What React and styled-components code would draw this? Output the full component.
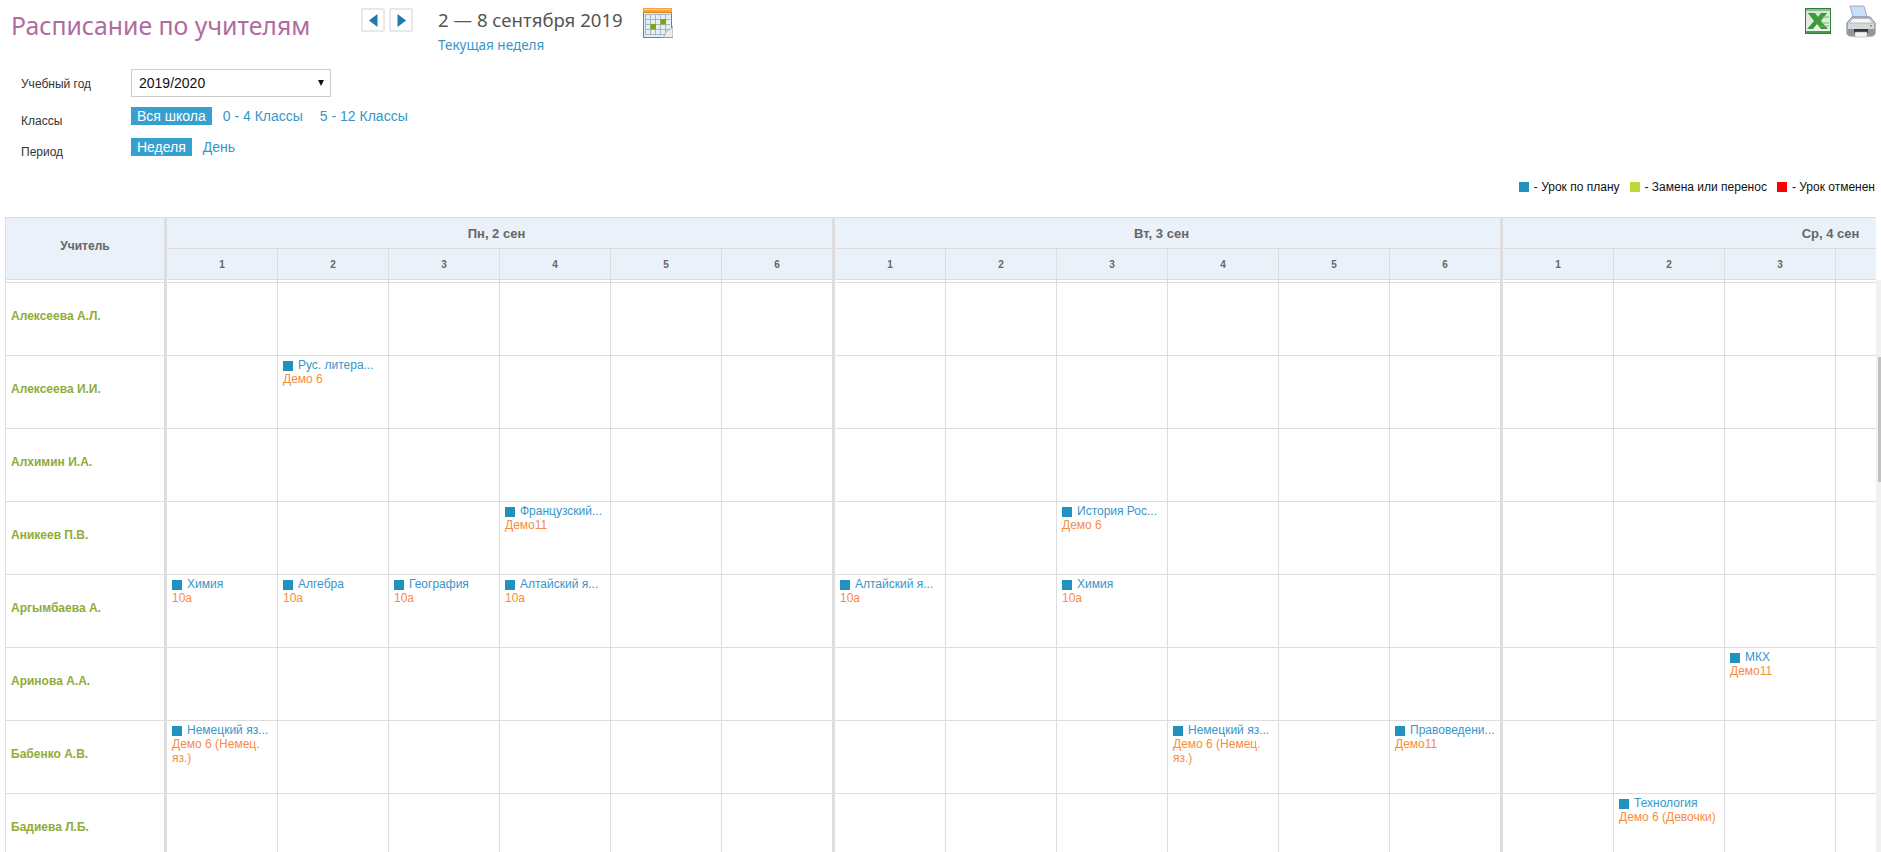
import styled, { createGlobalStyle } from "styled-components";

const GlobalStyle = createGlobalStyle`
  html, body {
    margin: 0;
    padding: 0;
    height: 100%;
    overflow: hidden;
    background: #fff;
    font-family: "Liberation Sans", Arial, sans-serif;
  }
`;

const Page = styled.div`
  width: 1881px;
  height: 852px;
  overflow: hidden;
`;
const TopBar = styled.div`
  display: flex;
  align-items: flex-start;
  height: 69px;
  padding: 8px 5px 0 11px;
  box-sizing: border-box;
`;
const Title = styled.h1`
  margin: -1px 0 0;
  width: 350px;
  font-family: "Noto Sans", sans-serif;
  font-weight: 400;
  font-size: 24.8px;
  line-height: 36px;
  color: #b06ca0;
`;
const ArrowButton = styled.button`
  width: 24px;
  height: 24px;
  margin-right: 4px;
  padding: 0;
  display: flex;
  align-items: center;
  justify-content: center;
  background: #fff;
  border: 2px solid #e8e8e8;
  border-radius: 2px;
`;
const DateBlock = styled.div`
  margin-left: 21px;
  width: 205px;
`;
const DateText = styled.div`
  font-family: "Noto Sans", sans-serif;
  font-size: 18.6px;
  line-height: 24px;
  color: #555;
`;
const CurrentWeek = styled.a`
  display: block;
  margin-top: 4px;
  font-family: "Noto Sans", sans-serif;
  font-size: 13.5px;
  line-height: 18px;
  color: #3796c8;
`;
const Spacer = styled.div`
  flex: 1;
`;
const Tool = styled.div`
  display: flex;
  margin-left: ${(p) => p.$gap}px;
  margin-top: ${(p) => p.$top}px;
`;
const Filters = styled.div`
  display: grid;
  grid-template-columns: 110px auto;
  grid-auto-rows: min-content;
  justify-content: start;
  padding-left: 21px;
`;
const Label = styled.div`
  font-size: 12px;
  line-height: 14px;
  color: #333;
  padding-top: ${(p) => p.$top}px;
`;
const YearSelect = styled.div`
  display: flex;
  align-items: center;
  justify-content: space-between;
  box-sizing: border-box;
  width: 200px;
  height: 28px;
  padding: 0 6px 0 7px;
  border: 1px solid #ccc;
  font-size: 14px;
  color: #111;
`;
const Links = styled.div`
  display: flex;
  align-items: center;
  height: 18px;
  margin-top: ${(p) => p.$top}px;
`;
const LinkItem = styled.a`
  font-size: 14px;
  line-height: 18px;
  padding: 0 6px;
  margin-right: 5px;
  color: ${(p) => (p.$active ? "#fff" : "#3796c8")};
  background: ${(p) => (p.$active ? "#36a0d0" : "transparent")};
`;
const Legend = styled.div`
  display: flex;
  justify-content: flex-end;
  align-items: center;
  height: 14px;
  margin-top: 21px;
  padding-right: 6px;
  font-size: 12px;
  color: #111;
`;
const LegendItem = styled.div`
  display: flex;
  align-items: center;
  margin-left: 10px;
`;
const Mark = styled.i`
  display: block;
  flex: none;
  width: 10px;
  height: 10px;
  margin-right: 5px;
  background: ${(p) => p.$color};
`;
const TableFrame = styled.div`
  display: flex;
  margin-top: 23px;
  padding-left: 5px;
`;
const TableClip = styled.div`
  width: 1871px;
  height: 635px;
  overflow: hidden;
`;
const Scrollbar = styled.div`
  flex: none;
  width: 5px;
  height: 572px;
  margin-top: 63px;
  background: #f1f1f1;
  display: flex;
  justify-content: flex-end;
`;
const ScrollThumb = styled.div`
  width: 3px;
  height: 125px;
  margin-top: 77px;
  background: #c1c1c1;
`;
const Row = styled.div`
  display: flex;
  width: max-content;
  box-sizing: border-box;
  height: ${(p) => p.$height}px;
  border-bottom: 1px solid #ddd;
  border-top: ${(p) => (p.$head ? "1px solid #ddd" : "none")};
  background: ${(p) => (p.$head ? "#eaf1f9" : "#fff")};
`;
const TeacherHead = styled.div`
  width: 158px;
  border-left: 1px solid #ddd;
  display: flex;
  align-items: center;
  justify-content: center;
  padding-bottom: 6px;
  box-sizing: content-box;
  font-size: 12px;
  font-weight: 700;
  color: #666;
`;
const TeacherCell = styled.div`
  width: 153px;
  padding: 0 0 6px 5px;
  border-left: 1px solid #ddd;
  display: flex;
  align-items: center;
  font-size: 12px;
  font-weight: 700;
  color: #8fac37;
`;
const Day = styled.div`
  width: 665px;
  border-left: 3px solid #ddd;
`;
const DayTitle = styled.div`
  box-sizing: border-box;
  height: 31px;
  padding-right: ${(p) => p.$shift}px;
  border-bottom: 1px solid #ddd;
  display: flex;
  align-items: center;
  justify-content: center;
  font-size: 13px;
  font-weight: 700;
  color: #666;
`;
const Slots = styled.div`
  display: grid;
  grid-template-columns: repeat(5, 111px) 110px;
  height: 100%;
`;
const HeadSlots = styled(Slots)`
  height: 30px;
`;
const PeriodHead = styled.div`
  display: flex;
  align-items: center;
  justify-content: center;
  font-size: 10px;
  font-weight: 700;
  color: #666;
  &:not(:last-child) {
    border-right: 1px solid #ddd;
  }
`;
const Slot = styled.div`
  box-sizing: border-box;
  padding: 2px 5px 0;
  min-width: 0;
  font-size: 12px;
  line-height: 14px;
  &:not(:last-child) {
    border-right: 1px solid #ddd;
  }
`;
const Subject = styled.div`
  display: flex;
  color: #3796c8;
  white-space: nowrap;
`;
const SubjectMark = styled(Mark)`
  margin-top: 3px;
`;
const Group = styled.div`
  color: #f58c3f;
`;

const PrevIcon = () => (
  <svg width="9" height="13" viewBox="0 0 9 13">
    <path d="M8.500 0v13L0 6.500z" fill="#2279ac" />
  </svg>
);
const NextIcon = () => (
  <svg width="9" height="13" viewBox="0 0 9 13">
    <path d="M.5 0v13L9 6.500z" fill="#2279ac" />
  </svg>
);
const CalendarIcon = () => (
  <svg width="30" height="30" viewBox="0 0 30 30">
    <rect x="0.5" y="2.5" width="28" height="27" fill="#e4eff7" stroke="#4e86b4" />
    <rect x="0" y="0" width="29" height="5" fill="#f7a43c" />
    <rect x="1" y="1" width="27" height="1" fill="#fbd08e" />
    <rect x="0" y="4" width="29" height="1" fill="#d9862a" />
    <path
      d="M2.500 6.500v21M7.500 6.500v21M12.500 6.500v21M17.500 6.500v21M22.500 6.500v21M2 6.500h25M2 11.500h25M2 16.500h25M2 21.500h25M2 26.500h25"
      stroke="#a4b6c4"
      fill="none"
    />
    <rect x="7.500" y="16" width="5.500" height="5.500" fill="#7da800" />
    <rect x="17.500" y="11" width="5.500" height="5.500" fill="#7da800" />
    <path d="M30 18v12H18c4-1 4-4 5-6 2-3 5-2 7-6z" fill="#ececec" stroke="#a8a8a8" />
    <path d="M18 30h12v-1H18z" fill="#999" />
  </svg>
);
const ExcelIcon = () => (
  <svg width="26" height="26" viewBox="0 0 26 26">
    <defs>
      <linearGradient id="xl" x1="0" y1="0" x2="0" y2="1">
        <stop offset="0" stopColor="#cfe5cf" />
        <stop offset="1" stopColor="#eef6ec" />
      </linearGradient>
    </defs>
    <rect x="0.5" y="0.5" width="25" height="25" fill="url(#xl)" stroke="#2f7d32" />
    <rect x="1" y="1" width="24" height="2" fill="#8fbe8f" />
    <rect x="1" y="23" width="24" height="2" fill="#4f9a52" />
    <path d="M3 5h7l3 4 3-4h6l-6 8 7 8h-7l-4-5-4 5H2l7-8z" fill="#3a9a3c" />
    <path d="M16 15h8M15 18h9M17 9h7" stroke="#6fb56f" />
  </svg>
);
const PrinterIcon = () => (
  <svg width="30" height="33" viewBox="0 0 30 33">
    <path d="M4 1h14l4 14H8z" fill="#c9defa" stroke="#8e9db0" strokeWidth="0.8" />
    <path d="M1 18l5-6h18l5 6v10c0 2-2 3-4 3H5c-2 0-4-1-4-3z" fill="#d6d9dc" stroke="#71777d" />
    <path d="M3 18h24l-4-4.500H7z" fill="#f5f6f7" stroke="#9aa0a6" strokeWidth="0.6" />
    <path d="M1.500 24h27v4c0 1.500-2 2.500-3.500 2.500H5c-1.500 0-3.500-1-3.500-2.500z" fill="#8e959b" />
    <rect x="8" y="24" width="14" height="4" fill="#33383c" />
    <rect x="9" y="27" width="12" height="5" fill="#f2f3f4" stroke="#8e959b" strokeWidth="0.5" />
    <rect x="24" y="20" width="2" height="1.500" fill="#57b04a" />
  </svg>
);
const SelectArrow = () => (
  <svg width="6" height="6" viewBox="0 0 6 6">
    <path d="M0 0h6L3 6z" fill="#111" />
  </svg>
);

const days = [
  { title: "Пн, 2 сен", shift: 6 },
  { title: "Вт, 3 сен", shift: 12 },
  { title: "Ср, 4 сен", shift: 10 },
];
const periods = [1, 2, 3, 4, 5, 6];

// ключ: день-урок
const teachers = [
  { name: "Алексеева А.Л.", lessons: {} },
  { name: "Алексеева И.И.", lessons: { "0-2": ["Рус. литера...", "Демо 6"] } },
  { name: "Алхимин И.А.", lessons: {} },
  {
    name: "Аникеев П.В.",
    lessons: {
      "0-4": ["Французский...", "Демо11"],
      "1-3": ["История Рос...", "Демо 6"],
    },
  },
  {
    name: "Аргымбаева А.",
    lessons: {
      "0-1": ["Химия", "10а"],
      "0-2": ["Алгебра", "10а"],
      "0-3": ["География", "10а"],
      "0-4": ["Алтайский я...", "10а"],
      "1-1": ["Алтайский я...", "10а"],
      "1-3": ["Химия", "10а"],
    },
  },
  { name: "Аринова А.А.", lessons: { "2-3": ["МКХ", "Демо11"] } },
  {
    name: "Бабенко А.В.",
    lessons: {
      "0-1": ["Немецкий яз...", "Демо 6 (Немец. яз.)"],
      "1-4": ["Немецкий яз...", "Демо 6 (Немец. яз.)"],
      "1-6": ["Правоведени...", "Демо11"],
    },
  },
  { name: "Бадиева Л.Б.", lessons: { "2-2": ["Технология", "Демо 6 (Девочки)"] } },
];

const BodyRow = ({ teacher, height }) => (
  <Row $height={height}>
    <TeacherCell>{teacher?.name}</TeacherCell>
    {days.map((day, d) => (
      <Day key={day.title}>
        <Slots>
          {periods.map((p) => {
            const lesson = teacher?.lessons[`${d}-${p}`];
            return (
              <Slot key={p}>
                {lesson && (
                  <>
                    <Subject>
                      <SubjectMark $color="#2191c0" />
                      {lesson[0]}
                    </Subject>
                    <Group>{lesson[1]}</Group>
                  </>
                )}
              </Slot>
            );
          })}
        </Slots>
      </Day>
    ))}
  </Row>
);

export default function App() {
  return (
    <Page>
      <GlobalStyle />
      <TopBar>
        <Title>Расписание по учителям</Title>
        <ArrowButton>
          <PrevIcon />
        </ArrowButton>
        <ArrowButton>
          <NextIcon />
        </ArrowButton>
        <DateBlock>
          <DateText>2 — 8 сентября 2019</DateText>
          <CurrentWeek>Текущая неделя</CurrentWeek>
        </DateBlock>
        <CalendarIcon />
        <Spacer />
        <Tool $gap={0} $top={0}>
          <ExcelIcon />
        </Tool>
        <Tool $gap={15} $top={-3}>
          <PrinterIcon />
        </Tool>
      </TopBar>
      <Filters>
        <Label $top={8}>Учебный год</Label>
        <YearSelect>
          2019/2020
          <SelectArrow />
        </YearSelect>
        <Label $top={17}>Классы</Label>
        <Links $top={10}>
          <LinkItem $active>Вся школа</LinkItem>
          <LinkItem>0 - 4 Классы</LinkItem>
          <LinkItem>5 - 12 Классы</LinkItem>
        </Links>
        <Label $top={17}>Период</Label>
        <Links $top={10}>
          <LinkItem $active>Неделя</LinkItem>
          <LinkItem>День</LinkItem>
        </Links>
      </Filters>
      <Legend>
        <LegendItem>
          <Mark $color="#2191c0" />- Урок по плану
        </LegendItem>
        <LegendItem>
          <Mark $color="#b8d936" />- Замена или перенос
        </LegendItem>
        <LegendItem>
          <Mark $color="#ff0000" />- Урок отменен
        </LegendItem>
      </Legend>
      <TableFrame>
        <TableClip>
          <Row $head $height={63}>
            <TeacherHead>Учитель</TeacherHead>
            {days.map((day) => (
              <Day key={day.title}>
                <DayTitle $shift={day.shift}>{day.title}</DayTitle>
                <HeadSlots>
                  {periods.map((p) => (
                    <PeriodHead key={p}>{p}</PeriodHead>
                  ))}
                </HeadSlots>
              </Day>
            ))}
          </Row>
          <BodyRow height={3} />
          {teachers.map((t) => (
            <BodyRow key={t.name} teacher={t} height={73} />
          ))}
        </TableClip>
        <Scrollbar>
          <ScrollThumb />
        </Scrollbar>
      </TableFrame>
    </Page>
  );
}
